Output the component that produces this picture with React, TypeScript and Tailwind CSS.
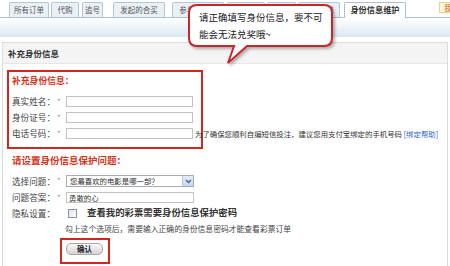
import React from "react";

const tabs: { label: string; ml: string; w: string }[] = [
  { label: "所有订单", ml: "ml-[9px]", w: "w-[40px]" },
  { label: "代购", ml: "ml-[2px]", w: "w-[28px]" },
  { label: "追号", ml: "ml-[3px]", w: "w-[21px]" },
  { label: "发起的合买", ml: "ml-[10px]", w: "w-[52px]" },
  { label: "参与的合买", ml: "ml-[7px]", w: "w-[52px]" },
  { label: "中奖订单", ml: "ml-[3px]", w: "w-[38px]" },
  { label: "充值", ml: "ml-[2px]", w: "w-[29px]" },
  { label: "提款订单", ml: "ml-[2px]", w: "w-[42px]" },
];

function Star() {
  return <span className="w-[9px] shrink-0 text-[8px] leading-none text-[#e8705a]">*</span>;
}

export default function App() {
  return (
    <div className="relative w-[450px] h-[266px] overflow-hidden bg-white text-[#333] font-['Noto_Sans_CJK_SC','Noto_Sans',sans-serif]">
      {/* tab bar */}
      <div className="flex h-[18px] items-end border-b border-[#a9c1d4]">
        {tabs.map((t) => (
          <div
            key={t.label}
            className={`${t.ml} ${t.w} shrink-0 h-[15px] border border-b-0 border-[#b3c7d7] bg-[#e9f1f7] rounded-t-[2px] flex justify-center pt-[1px] text-[7.5px] leading-[11px] text-[#555] whitespace-nowrap overflow-hidden`}
          >
            {t.label}
          </div>
        ))}
        <div className="ml-[4px] w-[62px] shrink-0 h-[16px] -mb-px border border-b-0 border-[#a9c1d4] bg-white rounded-t-[2px] flex justify-center pt-[1px] text-[8.2px] leading-[11px] font-bold text-[#333] whitespace-nowrap">
          身份信息维护
        </div>
        <div className="ml-[33px] mb-[4px] w-[50px] shrink-0 h-[11px] border border-[#f0cf8e] bg-[#fff5d8] pl-[4px] text-[7.5px] leading-[9px] text-[#c8641a] whitespace-nowrap">
          我的彩票
        </div>
      </div>
      {/* blue band */}
      <div className="h-[19px] bg-linear-to-b from-white to-[#dbe8f2]" />
      <div className="h-[5px]" />
      {/* panel */}
      <div className="ml-[2px] mr-[2px] h-[224px] border-l border-t border-r border-[#dcdcdc]">
        <div className="h-[21px] bg-[#f4f4f4] border-b border-[#e6e6e6] pl-[5px] flex items-center text-[8.5px] font-bold text-[#333]">
          补充身份信息
        </div>
        <div className="pl-[4px] pt-[6px]">
          {/* red box */}
          <div className="w-[196px] h-[79px] border-2 border-[#d3261f] pl-[3px] pt-[3px]">
            <div className="h-[12px] text-[8.8px] leading-[12px] font-bold text-[#d3341a]">补充身份信息：</div>
            <div className="mt-[9px] flex flex-col gap-[5px]">
              <div className="flex items-center h-[11px]">
                <span className="w-[45px] shrink-0 text-[8.6px] leading-none text-[#444]">真实姓名：</span>
                <Star />
                <div className="w-[127px] h-[11px] shrink-0 border border-[#c4c4c4] bg-white" />
              </div>
              <div className="flex items-center h-[11px]">
                <span className="w-[45px] shrink-0 text-[8.6px] leading-none text-[#444]">身份证号：</span>
                <Star />
                <div className="w-[127px] h-[11px] shrink-0 border border-[#c4c4c4] bg-white" />
              </div>
              <div className="flex items-center h-[11px]">
                <span className="w-[45px] shrink-0 text-[8.6px] leading-none text-[#444]">电话号码：</span>
                <Star />
                <div className="w-[127px] h-[11px] shrink-0 border border-[#c4c4c4] bg-white" />
                <span className="ml-[2px] whitespace-nowrap text-[7.4px] leading-none text-[#333]">
                  为了确保您顺利自编短信投注，建议您用支付宝绑定的手机号码 <span className="text-[#3366cc]">[绑定帮助]</span>
                </span>
              </div>
            </div>
          </div>
          {/* section 2 */}
          <div className="pl-[5px]">
            <div className="mt-[5px] h-[12px] text-[9.5px] leading-[12px] font-bold text-[#d3341a]">请设置身份信息保护问题：</div>
            <div className="mt-[9px] flex items-center h-[12px]">
              <span className="w-[45px] shrink-0 text-[8.6px] leading-none text-[#444]">选择问题：</span>
              <Star />
              <div className="w-[128px] h-[12px] shrink-0 border border-[#a5acb5] bg-white flex items-center">
                <span className="flex-1 pl-[3px] text-[7.4px] leading-none text-[#333] whitespace-nowrap">您最喜欢的电影是哪一部？</span>
                <div className="w-[11px] h-[10px] bg-linear-to-b from-[#e6eefb] to-[#c6d6f2] border-l border-[#b8c8e4] flex items-center justify-center">
                  <svg width="7" height="5" viewBox="0 0 7 5">
                    <path d="M1 1 L3.5 3.5 L6 1" fill="none" stroke="#4d6185" strokeWidth="1.4" />
                  </svg>
                </div>
              </div>
            </div>
            <div className="mt-[5px] flex items-center h-[11px]">
              <span className="w-[45px] shrink-0 text-[8.6px] leading-none text-[#444]">问题答案：</span>
              <Star />
              <div className="w-[128px] h-[11px] shrink-0 border border-[#c4c4c4] bg-white flex items-center pl-[2px] text-[7.4px] leading-none text-[#333]">
                勇敢的心
              </div>
            </div>
            <div className="mt-[5px] flex items-center h-[10px]">
              <span className="w-[56px] shrink-0 text-[8.6px] leading-none text-[#444]">隐私设置：</span>
              <div className="w-[9px] h-[9px] shrink-0 border border-[#8a96a4] bg-linear-to-br from-[#dfe3e8] to-white" />
              <span className="ml-[10px] whitespace-nowrap text-[9.4px] leading-none font-bold text-[#333]">查看我的彩票需要身份信息保护密码</span>
            </div>
            <div className="mt-[6px] ml-[53px] h-[10px] whitespace-nowrap text-[7.8px] leading-[10px] text-[#444]">
              勾上这个选项后，需要输入正确的身份信息密码才能查看彩票订单
            </div>
            <div className="mt-[4px] ml-[48px] w-[50px] h-[26px] border-2 border-[#d3261f] pl-[4px] pt-[3px]">
              <div className="w-[37px] h-[12px] rounded-[5px] border border-[#a8a8a8] bg-linear-to-b from-[#fafafa] to-[#d4d4d4] flex items-center justify-center text-[7.5px] leading-none font-bold text-[#222]">
                确认
              </div>
            </div>
          </div>
        </div>
      </div>
      {/* callout bubble */}
      <svg className="absolute left-[180px] top-0" width="160" height="70" viewBox="180 0 160 70">
        <defs>
          <filter id="sh" x="-10%" y="-10%" width="130%" height="140%">
            <feDropShadow dx="2" dy="2" stdDeviation="1.5" floodColor="#000" floodOpacity="0.3" />
          </filter>
        </defs>
        <path
          d="M197 5 H324 Q332 5 332 13 V38 Q332 46 324 46 H247 L228 63 L234 46 H197 Q189 46 189 38 V13 Q189 5 197 5 Z"
          fill="white"
          stroke="#c9252b"
          strokeWidth="2"
          filter="url(#sh)"
        />
      </svg>
      <div className="absolute left-[199px] top-[11px] text-[9.5px] leading-[13px] text-[#1a1a1a] whitespace-nowrap">
        请正确填写身份信息，要不可
      </div>
      <div className="absolute left-[199px] top-[28px] text-[9.5px] leading-[13px] text-[#1a1a1a] whitespace-nowrap">
        能会无法兑奖哦~
      </div>
    </div>
  );
}
